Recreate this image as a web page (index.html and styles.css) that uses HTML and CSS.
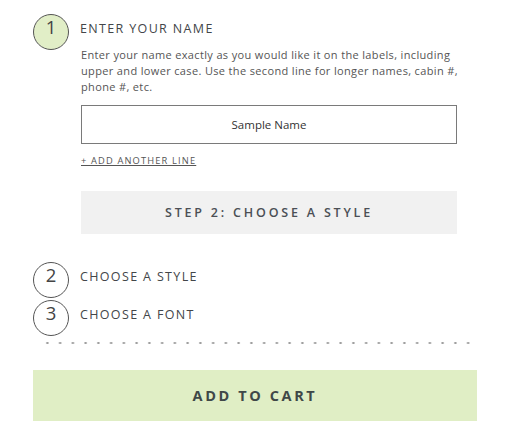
FILE: index.html
```html
<!DOCTYPE html>
<html>
<head>
<meta charset="utf-8">
<link rel="stylesheet" href="styles.css">
</head>
<body>
<div class="wrap">
  <div class="step step-active">
    <div class="num">1</div>
    <div class="content">
      <div class="title">ENTER YOUR NAME</div>
      <p class="desc">Enter your name exactly as you would like it on the labels, including upper and lower case. Use the second line for longer names, cabin #, phone #, etc.</p>
      <div class="input">Sample Name</div>
      <a class="add-line">+ ADD ANOTHER LINE</a>
      <div class="next">STEP 2: CHOOSE A STYLE</div>
    </div>
  </div>
  <div class="step step-2">
    <div class="num">2</div>
    <div class="content"><div class="title">CHOOSE A STYLE</div></div>
  </div>
  <div class="step step-3">
    <div class="num">3</div>
    <div class="content"><div class="title">CHOOSE A FONT</div></div>
  </div>
  <div class="dots"></div>
  <div class="cart">ADD TO CART</div>
</div>
</body>
</html>
```
FILE: styles.css
```css
html, body {
  margin: 0;
  background: #fff;
}
body {
  font-family: "Open Sans", "Lato", sans-serif;
  color: #4a4d50;
}
.wrap {
  width: 444px;
  padding: 14px 0 0 33px;
}
.step {
  display: flex;
  align-items: flex-start;
  gap: 11px;
}
.num {
  flex: none;
  width: 34px;
  height: 34px;
  border: 1px solid #555;
  border-radius: 50%;
  text-align: center;
  font-family: "Open Sans", sans-serif;
  font-size: 18.5px;
  line-height: 24px;
  color: #444;
}
.step-active .num {
  background: #e1eec7;
}
.content {
  flex: 1;
  display: flex;
  flex-direction: column;
}
.title {
  font-family: "Open Sans", sans-serif;
  font-size: 12.5px;
  letter-spacing: 1.35px;
  line-height: 16px;
  margin-top: 7px;
  color: #434649;
}
.desc {
  margin: 10px 0 0 1px;
  font-family: "Open Sans", sans-serif;
  font-size: 11px;
  letter-spacing: 0.35px;
  line-height: 16px;
  color: #555;
  width: 385px;
}
.input {
  margin: 10px 0 0 1px;
  width: 374px;
  height: 37px;
  border: 1px solid #7a7a7a;
  text-align: center;
  line-height: 37px;
  font-size: 11.5px;
  color: #333;
}
.add-line {
  align-self: flex-start;
  margin: 10px 0 0 1px;
  font-size: 9.3px;
  letter-spacing: 1.15px;
  line-height: 13px;
  color: #555;
  text-decoration: underline;
}
.next {
  margin: 24px 0 0 1px;
  width: 376px;
  height: 43px;
  background: #f1f1f1;
  text-align: center;
  line-height: 43px;
  font-family: "Open Sans", sans-serif;
  font-size: 12.5px;
  font-weight: 600;
  letter-spacing: 2.8px;
  color: #4b4f55;
}
.step-2 {
  margin-top: 28px;
}
.step-3 {
  margin-top: 2px;
}
.dots {
  margin: 5px 0 0 8px;
  width: 436px;
  height: 4px;
  background-image: radial-gradient(circle, #9a9a9a 0.9px, transparent 1.4px);
  background-size: 12.75px 4px;
  background-repeat: repeat-x;
}
.cart {
  margin-top: 25px;
  width: 444px;
  height: 51px;
  background: #e0eec5;
  text-align: center;
  line-height: 51px;
  font-family: "Open Sans", sans-serif;
  font-size: 14.5px;
  font-weight: 700;
  letter-spacing: 2.6px;
  color: #3f4848;
}
```
